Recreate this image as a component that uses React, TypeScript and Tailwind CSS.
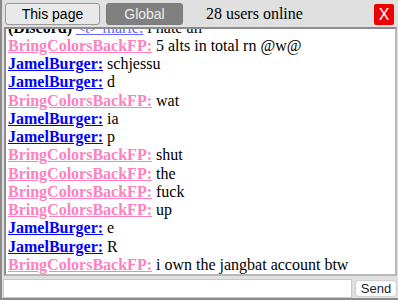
import React from "react";

const PINK = "text-[#ff80c0]";
const BLUE = "text-[#0000ff]";

type Msg = { who: "b" | "j"; text: string };

const msgs: Msg[] = [
  { who: "b", text: "5 alts in total rn @w@" },
  { who: "j", text: "schjessu" },
  { who: "j", text: "d" },
  { who: "b", text: "wat" },
  { who: "j", text: "ia" },
  { who: "j", text: "p" },
  { who: "b", text: "shut" },
  { who: "b", text: "the" },
  { who: "b", text: "fuck" },
  { who: "b", text: "up" },
  { who: "j", text: "e" },
  { who: "j", text: "R" },
  { who: "b", text: "i own the jangbat account btw" },
];

export default function App() {
  return (
    <div className="w-[398px] h-[300px] bg-[#e0e0e0] border-l-2 border-b-2 border-[#8a8a8a] flex flex-col overflow-hidden">
      <div className="h-[27px] flex items-start pt-[3px] pl-[3px] pr-[3px] shrink-0">
        <button className="h-[22px] w-[95px] rounded-[3px] border border-[#9a9a9a] bg-[#e9e9e9] text-[14px] text-black leading-[20px] flex items-center justify-center font-['Liberation_Sans',Arial,sans-serif]">
          This page
        </button>
        <button className="ml-[6px] h-[22px] w-[77px] rounded-[3px] border border-[#7a7a7a] bg-[#808080] text-[14px] text-[#ececec] leading-[20px] flex items-center justify-center font-['Liberation_Sans',Arial,sans-serif]">
          Global
        </button>
        <span className="ml-[23px] mt-[2px] text-[16px] text-black leading-[18px] font-['Liberation_Serif','Times_New_Roman',serif]">
          28 users online
        </span>
        <button className="ml-auto mr-[1px] mt-[1px] h-[21px] w-[20px] rounded-[2px] bg-[#ee0000] text-white text-[16px] leading-[20px] flex items-center justify-center font-['Liberation_Sans',Arial,sans-serif]">
          X
        </button>
      </div>
      <div className="ml-[2px] mr-[1px] h-[249px] shrink-0 bg-white border-2 border-t-[#8c8c8c] border-l-[#8c8c8c] border-b-[#b8b8b8] border-r-[#b8b8b8] overflow-hidden flex flex-col justify-end pl-[2px] font-['Liberation_Serif','Times_New_Roman',serif] text-[16px] leading-[18.25px] text-black">
        <div className="whitespace-nowrap shrink-0">
          <b>(Discord)</b>{" "}
          <span className="text-[#6666ff] underline">&lt;t&gt; marie:</span> i hate all
        </div>
        {msgs.map((m, i) => (
          <div key={i} className="whitespace-nowrap shrink-0">
            <b className={`underline ${m.who === "b" ? PINK : BLUE}`}>
              {m.who === "b" ? "BringColorsBackFP:" : "JamelBurger:"}
            </b>{" "}
            {m.text}
          </div>
        ))}
      </div>
      <div className="flex items-center mt-[3px] ml-[1px] mr-[1px] h-[19px] shrink-0">
        <div className="h-[19px] flex-1 bg-white border border-[#c8c8c8]" />
        <button className="ml-[3px] h-[17px] w-[42px] rounded-[4px] border border-[#d0d0d0] bg-white text-[13px] text-[#222] leading-[15px] flex items-center justify-center font-['Liberation_Sans',Arial,sans-serif]">
          Send
        </button>
      </div>
    </div>
  );
}
